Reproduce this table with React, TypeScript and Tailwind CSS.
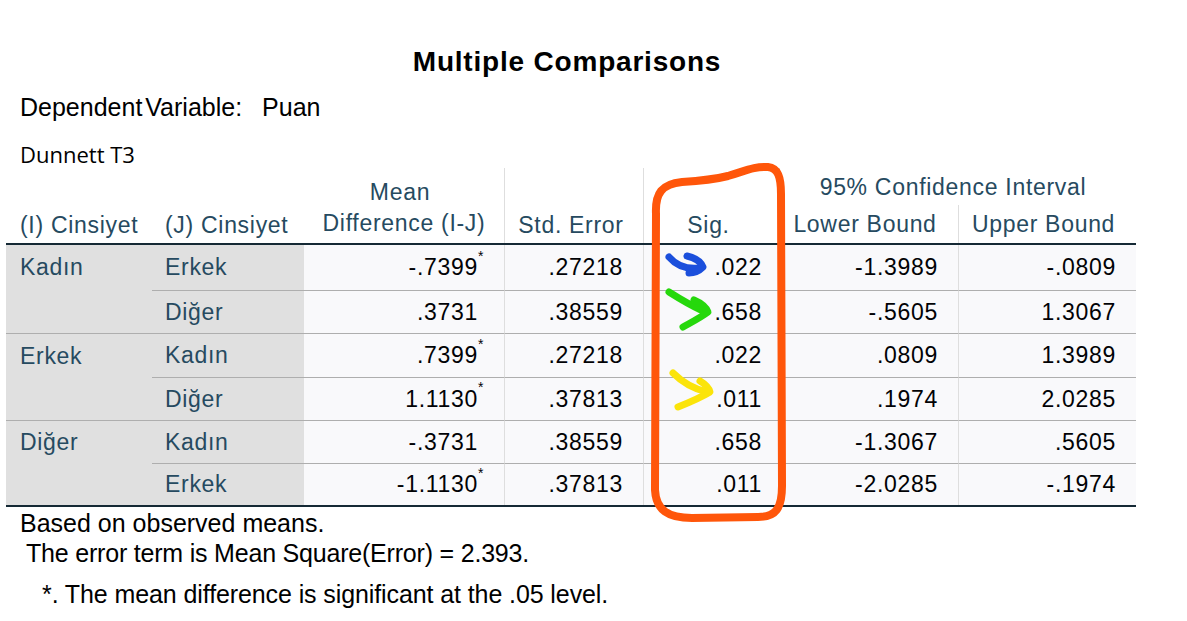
type Row = {
  i?: string;
  j: string;
  md: string;
  star?: boolean;
  se: string;
  sig: string;
  lo: string;
  up: string;
  h: string;
};

const groups: Row[][] = [
  [
    { i: "Kadın", j: "Erkek", md: "-.7399", star: true, se: ".27218", sig: ".022", lo: "-1.3989", up: "-.0809", h: "h-[45px]" },
    { j: "Diğer", md: ".3731", se: ".38559", sig: ".658", lo: "-.5605", up: "1.3067", h: "h-[43px]" },
  ],
  [
    { i: "Erkek", j: "Kadın", md: ".7399", star: true, se: ".27218", sig: ".022", lo: ".0809", up: "1.3989", h: "h-[44px]" },
    { j: "Diğer", md: "1.1130", star: true, se: ".37813", sig: ".011", lo: ".1974", up: "2.0285", h: "h-[43px]" },
  ],
  [
    { i: "Diğer", j: "Kadın", md: "-.3731", se: ".38559", sig: ".658", lo: "-1.3067", up: ".5605", h: "h-[43px]" },
    { j: "Erkek", md: "-1.1130", star: true, se: ".37813", sig: ".011", lo: "-2.0285", up: "-.1974", h: "h-[42px]" },
  ],
];

const Num = ({ children, line, left, h }: { children: React.ReactNode; line: boolean; left: boolean; h: string }) => (
  <div
    className={`${h} bg-[#f9f9fb] flex items-center justify-end pr-[20px] text-[#010205] ${
      line ? "border-t border-t-[#aeaeae]" : ""
    } ${left ? "border-l border-l-[#dedede]" : ""}`}
  >
    {children}
  </div>
);

// hand drawn marks on top of the table
const Annotations = () => (
  <svg className="absolute left-0 top-0 pointer-events-none" width="1187" height="621" viewBox="0 0 1187 621">
    <path
      d="M656 214 C655 193 662 184 682 182 C699 181 712 180 728 176 C745 171 755 166 768 167 C778 168 781 177 781 194 L782 486 C782 508 776 517 758 517 L692 518 C668 518 656 510 655 490 Z"
      fill="none"
      stroke="#ff560a"
      strokeWidth="8"
      strokeLinejoin="round"
    />
    <g fill="none" strokeWidth="7" strokeLinecap="round" strokeLinejoin="round">
      <path d="M669 257 C675 264 684 270 700 268" stroke="#1b4fdc" />
      <path d="M687 256 C696 258 701 262 703 267 C699 271 694 273 689 273" stroke="#1b4fdc" />
      <path d="M669 292 C680 299 690 305 703 311" stroke="#26d80c" />
      <path d="M694 300 C701 303 706 307 708 312 C700 318 690 323 683 327" stroke="#26d80c" />
      <path d="M673 373 C682 382 694 389 707 392" stroke="#fbe40a" />
      <path d="M700 381 C705 384 709 388 710 392 C700 398 688 403 678 407" stroke="#fbe40a" />
    </g>
  </svg>
);

const App = () => {
  return (
    <div className="relative w-[1187px] h-[621px] overflow-hidden bg-white font-['Liberation_Sans',Arial,sans-serif]">
      <div className="flex flex-col pt-[44px]">
        <div className="ml-[2px] w-[1130px] h-[36px] leading-[36px] text-center text-[28px] font-bold tracking-[0.8px] text-black">
          Multiple Comparisons
        </div>
        <div className="mt-[12px] ml-[20px] h-[30px] leading-[30px] text-[25px] text-black flex">
          <span className="[word-spacing:-4px]">Dependent Variable:</span>
          <span className="ml-[20px]">Puan</span>
        </div>
        <div className="mt-[19px] ml-[20px] h-[26px] leading-[26px] text-[22px] text-black font-['Open_Sans',sans-serif]">
          Dunnett T3
        </div>

        <div className="mt-[1px] ml-[6px] w-[1130px] text-[23px] tracking-[0.7px]">
          <div className="grid grid-cols-[146px_152px_200px_139px_136px_179px_178px] grid-rows-[37px_38px] text-[#264a60] leading-[26px]">
            <div className="row-span-2 flex items-end pl-[14px] pb-[5px]">(I) Cinsiyet</div>
            <div className="row-span-2 flex items-end pl-[13px] pb-[5px]">(J) Cinsiyet</div>
            <div className="row-span-2 flex flex-col items-center justify-end pb-[4px] leading-[31px]">
              <span className="pr-[8px]">Mean</span>
              <span>Difference (I-J)</span>
            </div>
            <div className="row-span-2 flex items-end justify-center pb-[5px] pr-[6px] border-l border-l-[#dedede]">Std. Error</div>
            <div className="row-span-2 flex items-end justify-center pb-[5px] pr-[6px] border-l border-l-[#dedede]">Sig.</div>
            <div className="col-span-2 flex items-center justify-center pr-[10px] border-l border-l-[#dedede]">
              95% Confidence Interval
            </div>
            <div className="flex items-center justify-center border-l border-l-[#dedede] pr-[8px]">Lower Bound</div>
            <div className="flex items-center justify-center border-l border-l-[#dedede] pr-[8px]">Upper Bound</div>
          </div>
          <div className="h-[2px] bg-[#152935]" />

          <div className="grid grid-cols-[146px_152px_200px_139px_136px_179px_178px]">
            {groups.map((g, gi) => (
              <div key={gi} className="contents">
                <div
                  className={`row-span-2 bg-[#e0e0e0] pl-[14px] text-[#264a60] ${
                    gi > 0 ? "border-t border-t-[#aeaeae]" : ""
                  }`}
                >
                  <div className={`${g[0].h} flex items-center`}>{g[0].i}</div>
                </div>
                {g.map((r, ri) => {
                  const line = gi > 0 || ri > 0;
                  return (
                    <div key={ri} className="contents">
                      <div
                        className={`${r.h} bg-[#e0e0e0] flex items-center pl-[13px] text-[#264a60] ${
                          line ? "border-t border-t-[#aeaeae]" : ""
                        }`}
                      >
                        {r.j}
                      </div>
                      <Num line={line} left={false} h={r.h}>
                        <span className={r.star ? "" : "pr-[6px]"}>{r.md}</span>
                        {r.star && (
                          <span className="relative -top-[12px] w-[6px] text-[14px] leading-none tracking-normal">*</span>
                        )}
                      </Num>
                      <Num line={line} left={true} h={r.h}>
                        {r.se}
                      </Num>
                      <Num line={line} left={true} h={r.h}>
                        <span className="mr-[-3px]">{r.sig}</span>
                      </Num>
                      <Num line={line} left={true} h={r.h}>
                        {r.lo}
                      </Num>
                      <Num line={line} left={true} h={r.h}>
                        {r.up}
                      </Num>
                    </div>
                  );
                })}
              </div>
            ))}
          </div>
          <div className="h-[2px] bg-[#152935]" />
        </div>

        <div className="ml-[20px] mt-[2px] h-[28px] leading-[28px] text-[25px] text-black">
          Based on observed means.
        </div>
        <div className="ml-[26px] mt-[2px] h-[28px] leading-[28px] text-[25px] text-black tracking-[-0.2px]">
          The error term is Mean Square(Error) = 2.393.
        </div>
        <div className="ml-[42px] mt-[13px] h-[28px] leading-[28px] text-[25px] text-black tracking-[-0.1px]">
          *. The mean difference is significant at the .05 level.
        </div>
      </div>
      <Annotations />
    </div>
  );
};

export default App;
